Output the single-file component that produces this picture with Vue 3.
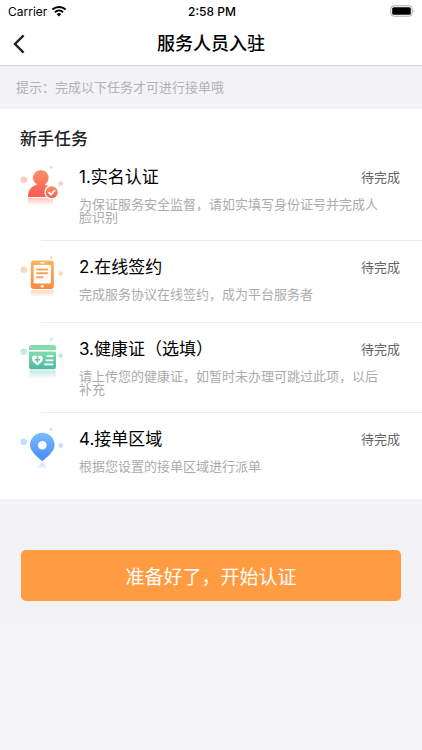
<script setup>
// Lista de tareas que debe completar el nuevo prestador
const tasks = [
  {
    id: 1,
    icon: 'person',
    color: '#ff7d5c',
    title: '1.实名认证',
    desc: '为保证服务安全监督，请如实填写身份证号并完成人脸识别',
    status: '待完成',
  },
  {
    id: 2,
    icon: 'phone',
    color: '#ff9d50',
    title: '2.在线签约',
    desc: '完成服务协议在线签约，成为平台服务者',
    status: '待完成',
  },
  {
    id: 3,
    icon: 'card',
    color: '#62ccaa',
    title: '3.健康证（选填）',
    desc: '请上传您的健康证，如暂时未办理可跳过此项，以后补充',
    status: '待完成',
  },
  {
    id: 4,
    icon: 'pin',
    color: '#69a8ff',
    title: '4.接单区域',
    desc: '根据您设置的接单区域进行派单',
    status: '待完成',
  },
]

// Degradados de los iconos: [id, color superior, color inferior]
const gradients = [
  ['person', '#ff9068', '#fb5a50'],
  ['phone', '#ffb35c', '#fa8a42'],
  ['card', '#7fdcae', '#4fb8a4'],
  ['pin', '#7cbcff', '#4489fb'],
]
</script>

<template>
  <div class="page">
    <header class="header">
      <div class="status-bar">
        <div class="carrier">
          <span>Carrier</span>
          <svg class="wifi" viewBox="0 0 16 12" aria-hidden="true">
            <path d="M1.4 4.6a9.6 9.6 0 0 1 13.2 0" />
            <path d="M3.9 7.2a6 6 0 0 1 8.2 0" />
            <path class="wifi-dot" d="M8 11.6 5.7 9.2a3.3 3.3 0 0 1 4.6 0z" />
          </svg>
        </div>
        <span class="clock">2:58 PM</span>
        <svg class="battery" viewBox="0 0 26 12" aria-hidden="true">
          <rect x="0.8" y="0.8" width="21.4" height="10.4" rx="3" fill="#fff" stroke="#aaa" />
          <rect x="2.2" y="2.2" width="18.6" height="7.6" rx="1.6" fill="#000" />
          <path d="M23.6 4.2q1.6 1.8 0 3.6z" fill="#999" />
        </svg>
      </div>
      <nav class="nav-bar">
        <button type="button" class="btn-back" aria-label="返回">
          <svg viewBox="0 0 12 20" aria-hidden="true">
            <path d="M10.6 1.4 2 10l8.6 8.6" />
          </svg>
        </button>
        <h1>服务人员入驻</h1>
      </nav>
    </header>

    <main class="content">
      <p class="hint">提示：完成以下任务才可进行接单哦</p>

      <section class="tasks">
        <h2>新手任务</h2>
        <ul>
          <li v-for="task in tasks" :key="task.id" class="task">
            <svg class="task-icon" viewBox="0 0 44 48" aria-hidden="true">
              <g :fill="task.color">
                <circle cx="3.8" cy="14.7" r="3.3" opacity="0.4" />
                <circle cx="31.3" cy="2.4" r="1.3" opacity="0.4" />
                <circle cx="40.6" cy="18.6" r="2.3" opacity="0.4" />
              </g>
              <g v-if="task.icon === 'person'">
                <path
                  d="M8 32c0-7 3.4-10.8 9-12.4a7.8 7.8 0 1 1 7.6 0c4 1 6.4 3 7.6 5.6V32z"
                  fill="url(#g-person)"
                />
                <rect x="8" y="33" width="25" height="8" fill="url(#r-person)" />
                <circle cx="31.7" cy="27.2" r="7.4" fill="#fff" />
                <circle cx="31.7" cy="27.2" r="6" fill="url(#g-person)" />
                <path class="check" d="m28.6 27.2 2.4 2.4 4-4.6" />
              </g>
              <g v-else-if="task.icon === 'phone'">
                <rect x="10.8" y="5.5" width="23" height="28.6" rx="3" fill="url(#g-phone)" />
                <rect x="13.6" y="10" width="17.4" height="18.4" rx="1" fill="#fff" />
                <rect x="20" y="7" width="4.6" height="1.6" rx="0.8" fill="#fff" />
                <circle cx="22.3" cy="31.3" r="1.4" fill="#fff" />
                <path class="doc-lines" d="M17 14.4h10.4M17 18.3h10.4M17 22.2h5.6" />
                <rect x="11" y="35.2" width="22.6" height="7" fill="url(#r-phone)" />
              </g>
              <g v-else-if="task.icon === 'card'">
                <path d="M9 13v-2.5A2.5 2.5 0 0 1 11.5 8h22a2.5 2.5 0 0 1 2.5 2.5V13z" fill="#83dbae" />
                <path
                  d="M9 14.6h27V30a2.2 2.2 0 0 1-2.2 2.2H11.2A2.2 2.2 0 0 1 9 30z"
                  fill="url(#g-card)"
                />
                <path
                  d="M17.4 28.2c-3.4-2.2-5.5-4.2-5.5-6.7 0-3.2 3.8-4 5.5-1.6 1.7-2.4 5.5-1.6 5.5 1.6 0 2.5-2.1 4.5-5.5 6.7z"
                  fill="#fff"
                />
                <path class="cross" d="M17.4 20.2v5.2M14.8 22.8h5.2" />
                <path class="card-lines" d="M26.6 19.2h6.6M25.6 23.3h7.6M24.2 27.4h9" />
                <rect x="9.4" y="33.6" width="26.2" height="8" fill="url(#r-card)" />
              </g>
              <g v-else>
                <path
                  d="M22.3 34.2C17.5 29.8 10 24.6 10 18a12.3 12.3 0 0 1 24.6 0c0 6.6-7.5 11.8-12.3 16.2z"
                  fill="url(#g-pin)"
                />
                <circle cx="22.3" cy="18.3" r="4.3" fill="#fff" />
                <path d="M22.3 35.4 29 42H15.6z" fill="url(#r-pin)" />
              </g>
            </svg>
            <div class="task-body">
              <div class="task-head">
                <h3>{{ task.title }}</h3>
                <span class="task-status">{{ task.status }}</span>
              </div>
              <p class="task-desc">{{ task.desc }}</p>
            </div>
          </li>
        </ul>
      </section>

      <div class="actions">
        <button type="button" class="btn-start">准备好了，开始认证</button>
      </div>
    </main>

    <!-- Definiciones compartidas por los iconos -->
    <svg class="defs" width="0" height="0" aria-hidden="true">
      <defs>
        <template v-for="[id, top, bottom] in gradients" :key="id">
          <linearGradient :id="'g-' + id" x1="0" y1="0" x2="0" y2="1">
            <stop offset="0" :stop-color="top" />
            <stop offset="1" :stop-color="bottom" />
          </linearGradient>
          <linearGradient :id="'r-' + id" x1="0" y1="0" x2="0" y2="1">
            <stop offset="0" :stop-color="bottom" stop-opacity="0.35" />
            <stop offset="1" :stop-color="bottom" stop-opacity="0" />
          </linearGradient>
        </template>
      </defs>
    </svg>
  </div>
</template>

<style>
body {
  margin: 0;
  background: #f5f5f7;
}
</style>

<style scoped>
.page {
  position: relative;
  min-height: 100vh;
  background: #f5f5f7;
  font-family: Inter, 'Noto Sans CJK SC', sans-serif;
  color: #000;
}
h1,
h2,
h3,
p,
ul {
  margin: 0;
  padding: 0;
}
.header {
  background: #fff;
  border-bottom: 1px solid #d9d9dc;
}
.status-bar {
  display: grid;
  grid-template-columns: 1fr auto 1fr;
  align-items: center;
  height: 22px;
  padding: 0 6px 0 8px;
  font-size: 12px;
}
.carrier {
  display: flex;
  align-items: center;
  gap: 4px;
}
.wifi {
  width: 16px;
  height: 12px;
  fill: none;
  stroke: #000;
  stroke-width: 2;
}
.wifi-dot {
  fill: #000;
  stroke: none;
}
.clock {
  font-weight: 500;
}
.battery {
  justify-self: end;
  width: 26px;
  height: 12px;
}
.nav-bar {
  display: grid;
  grid-template-columns: 40px 1fr 40px;
  align-items: center;
  height: 43px;
}
.nav-bar h1 {
  font-size: 18px;
  font-weight: 500;
  line-height: 24px;
  text-align: center;
}
.btn-back {
  height: 40px;
  padding: 0 0 0 13px;
  border: none;
  background: none;
  text-align: left;
  cursor: pointer;
}
.btn-back svg {
  display: block;
  width: 12px;
  height: 20px;
  fill: none;
  stroke: #222;
  stroke-width: 2.4;
}
.content {
  background: #f3f3f6;
}
.hint {
  padding: 11px 16px 12px;
  font-size: 13px;
  line-height: 20px;
  color: #b2b2b4;
}
.tasks {
  background: #fff;
  padding: 18px 0 4px;
}
.tasks h2 {
  padding-left: 20px;
  font-size: 17px;
  font-weight: 500;
  line-height: 24px;
  color: #222;
}
.tasks ul {
  list-style: none;
}
.task {
  display: flex;
  gap: 15px;
  box-sizing: border-box;
  min-height: 82px;
  padding: 14px 22px 17px 20px;
  background: linear-gradient(#ececee, #ececee) 41px 100% / 100% 1px no-repeat;
}
.task:last-child {
  background: none;
}
.task-icon {
  flex: none;
  width: 44px;
  height: 48px;
}
.task-body {
  flex: 1;
}
.task-head {
  display: flex;
  align-items: flex-start;
  justify-content: space-between;
}
.task-head h3 {
  font-size: 17px;
  font-weight: 400;
  line-height: 24px;
}
.task-status {
  font-size: 13px;
  line-height: 24px;
  color: #666;
}
.task-desc {
  padding: 9px 10px 0 0;
  font-size: 13px;
  line-height: 13px;
  color: #aaacac;
}
.check {
  fill: none;
  stroke: #fff;
  stroke-width: 1.8;
}
.doc-lines {
  stroke: #f9a45e;
  stroke-width: 2;
  stroke-linecap: round;
}
.cross {
  stroke: #5cc0a6;
  stroke-width: 1.6;
}
.card-lines {
  stroke: #fff;
  stroke-width: 1.8;
}
.actions {
  padding: 51px 21px 23px;
}
.btn-start {
  display: block;
  width: 100%;
  height: 51px;
  border: none;
  border-radius: 5px;
  background: #ff9c42;
  color: #fff;
  font-family: inherit;
  font-size: 19px;
  cursor: pointer;
}
.defs {
  position: absolute;
}
</style>
